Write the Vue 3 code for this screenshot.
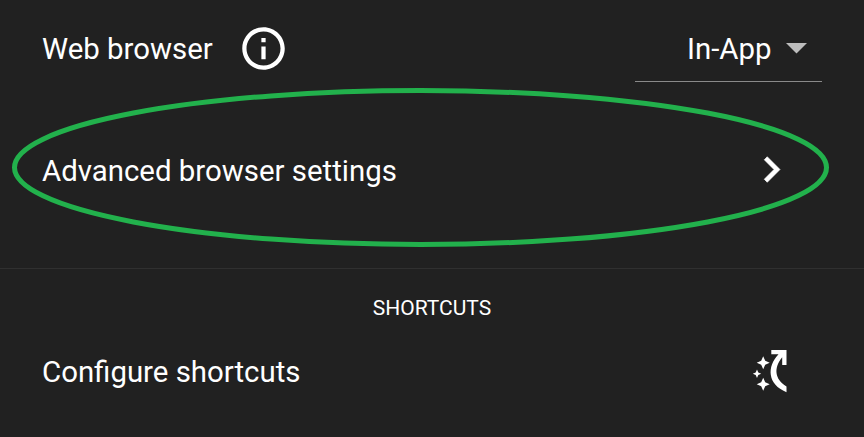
<script setup>
const labels = {
  browser: 'Web browser',
  mode: 'In-App',
  advanced: 'Advanced browser settings',
  section: 'Shortcuts',
  configure: 'Configure shortcuts',
}
</script>

<template>
  <main class="settings">
    <div class="row row-browser">
      <span class="label">{{ labels.browser }}</span>
      <svg class="info" viewBox="0 0 24 24">
        <path d="M11 7h2v2h-2zm0 4h2v6h-2zm1-9C6.480 2 2 6.480 2 12s4.480 10 10 10 10-4.480 10-10S17.520 2 12 2zm0 18c-4.410 0-8-3.590-8-8s3.590-8 8-8 8 3.590 8 8-3.590 8-8 8z" />
      </svg>
      <div class="select">
        <span class="label">{{ labels.mode }}</span>
        <svg class="caret" viewBox="0 0 21 11"><path d="M0 0h21L10.500 10.500z" /></svg>
      </div>
    </div>

    <div class="row row-advanced">
      <span class="label">{{ labels.advanced }}</span>
      <svg class="chevron" viewBox="0 0 24 24">
        <path d="M10 6 8.590 7.410 13.170 12l-4.580 4.590L10 18l6-6z" />
      </svg>
      <svg class="highlight" viewBox="0 0 818 160">
        <ellipse cx="408.500" cy="79.500" rx="406" ry="77" />
      </svg>
    </div>

    <section class="shortcuts">
      <h2 class="heading">{{ labels.section }}</h2>
      <div class="row row-configure">
        <span class="label">{{ labels.configure }}</span>
        <svg class="shortcut-icon" viewBox="0 0 36 44">
          <path d="M19.300 0h15.200v14.900h-4.300V7.300C21.500 17.500 22.500 29.500 34.500 36.500v5.700C15.500 34.500 14.500 17 26.500 4.300h-7.200z" />
          <path d="M11.200 6.300l2 4.500 4.500 2-4.500 2-2 4.500-2-4.500-4.500-2 4.500-2z" />
          <path d="M5 19.500l1.300 2.900 2.900 1.300-2.900 1.300L5 27.900l-1.300-2.900L.8 23.700l2.900-1.300z" />
          <path d="M11.200 27.700l2 4.500 4.500 2-4.500 2-2 4.500-2-4.500-4.500-2 4.500-2z" />
        </svg>
      </div>
    </section>
  </main>
</template>

<style>
body {
  background: #212121;
}
</style>

<style scoped>
.settings {
  box-sizing: border-box;
  width: 864px;
  height: 437px;
  overflow: hidden;
  background: #212121;
  color: #fff;
  font-family: Roboto, sans-serif;
  font-size: 29.4px;
  line-height: 34px;
}

svg {
  display: block;
  flex: none;
  fill: #fff;
}

.row {
  display: flex;
  align-items: center;
  box-sizing: border-box;
  padding-left: 42px;
}

.label {
  white-space: nowrap;
}

.row-browser {
  height: 97px;
  padding-right: 42px;
}

.info {
  width: 51px;
  height: 51px;
  margin-left: 25px;
}

.select {
  display: flex;
  align-items: center;
  box-sizing: border-box;
  width: 187px;
  height: 66px;
  margin-left: auto;
  padding-top: 1px;
  padding-left: 52px;
  border-bottom: 1px solid #8a8a8a;
}

.caret {
  width: 21px;
  height: 11px;
  margin-left: 14px;
  fill: #bdbdbd;
}

.row-advanced {
  position: relative;
  justify-content: space-between;
  height: 171px;
  padding-right: 67px;
  padding-bottom: 24px;
}

.chevron {
  width: 51px;
  height: 51px;
  margin-bottom: 2px;
  stroke: #fff;
  stroke-width: 0.3;
  stroke-linejoin: round;
}

.highlight {
  position: absolute;
  top: -9px;
  left: 12px;
  width: 818px;
  height: 160px;
  fill: none;
  stroke: #22b14c;
  stroke-width: 5;
}

.shortcuts {
  border-top: 1px solid #303030;
}

.heading {
  margin: 0;
  padding-top: 27px;
  font-size: 21px;
  font-weight: 400;
  line-height: 25px;
  text-align: center;
  text-transform: uppercase;
}

.row-configure {
  justify-content: space-between;
  height: 102px;
  padding-right: 76px;
}

.shortcut-icon {
  width: 36px;
  height: 44px;
}
</style>
